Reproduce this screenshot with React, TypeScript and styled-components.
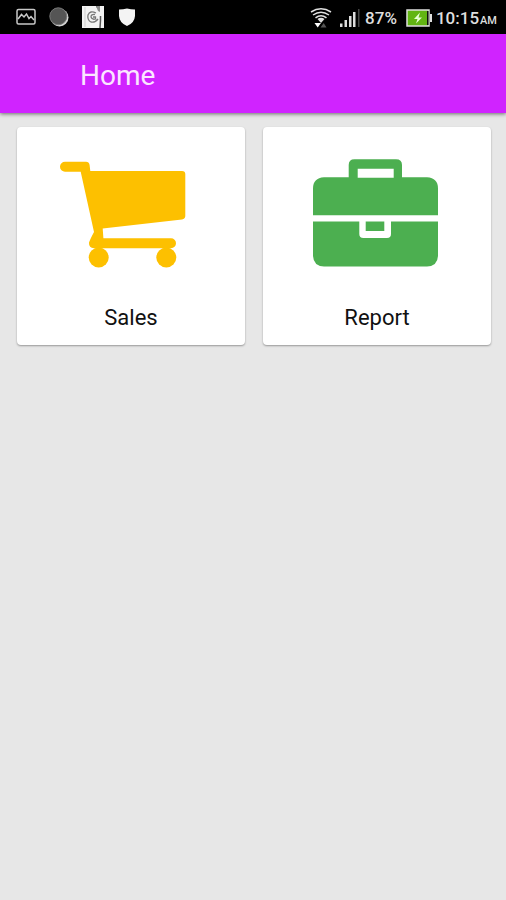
import React from "react";
import styled, { createGlobalStyle } from "styled-components";

const GlobalStyle = createGlobalStyle`
  *, *::before, *::after { box-sizing: border-box; }
  body { margin: 0; background: #e7e7e7; font-family: Roboto, "Liberation Sans", sans-serif; }
`;

const Screen = styled.div`
  min-height: 100vh;
  display: flex;
  flex-direction: column;
  background: #e7e7e7;
`;

const StatusBar = styled.div`
  display: flex;
  align-items: center;
  justify-content: space-between;
  height: 34px;
  padding: 0 9px 0 16px;
  background: #000;
  color: #dedede;
`;

const Notifications = styled.div`
  display: flex;
  align-items: center;
  gap: 13px;
`;

const SystemStatus = styled.div`
  display: flex;
  align-items: center;
  padding-top: 2px;
  font-size: 17px;
  font-weight: 500;
  line-height: 24px;
`;

const Glyph = styled.svg<{ $gap?: number }>`
  display: block;
  flex: none;
  margin-right: ${(p) => p.$gap ?? 0}px;
`;

const Percent = styled.span`
  margin-right: 9px;
`;

const Clock = styled.span`
  margin-left: 4px;
`;

const Meridiem = styled.small`
  margin-left: 1px;
  font-size: 11px;
  line-height: 12px;
`;

const AppBar = styled.header`
  display: flex;
  align-items: center;
  height: 79px;
  padding: 4px 80px 0;
  background: #d023ff;
  box-shadow: 0 1px 4px rgba(0, 0, 0, 0.55);
`;

const Title = styled.h1`
  margin: 0;
  color: #fbe6ff;
  font-size: 28px;
  font-weight: 400;
  line-height: 36px;
`;

const Tiles = styled.main`
  display: grid;
  grid-template-columns: 1fr 1fr;
  gap: 18px;
  padding: 14px 15px 14px 17px;
`;

const Tile = styled.button`
  display: flex;
  flex-direction: column;
  align-items: center;
  gap: 35px;
  padding: 32px 8px 13px;
  border: 0;
  border-radius: 4px;
  background: #fff;
  box-shadow: 0 1px 2px rgba(0, 0, 0, 0.35);
  color: #111;
  font-family: inherit;
  font-size: 22px;
  line-height: 28px;
  cursor: pointer;
`;

const CartIcon = () => (
  <Glyph width="144" height="110" viewBox="-1 -1 144 110" fill="#fdc000" aria-hidden="true">
    <path d="M5 1.7H26Q29 1.7 29.6 5L30.3 11H122Q125.3 11 125.3 14V56Q125.3 59 122 59.4L42.7 68.4L43.4 78.3H111A5 5 0 0 1 111 88.3H34Q28.8 88 29 83Q29.2 81 34 72L20.7 11.7H5A5 5 0 0 1 5 1.7Z" />
    <circle cx="38.7" cy="97.5" r="10" />
    <circle cx="106.3" cy="97.5" r="10" />
  </Glyph>
);

const CaseIcon = () => (
  <Glyph width="144" height="110" viewBox="-8 0 144 110" fill="#4caf50" aria-hidden="true">
    <path
      fillRule="evenodd"
      d="M35.7 19V6Q35.7 .3 41.5 .3H83Q89 .3 89 6V18.3H114Q125 19 125 29.5V56.3H0V29.5Q0 19 11 18.3H35.7ZM44.7 9.7V18.8H80.7V9.7Z"
    />
    <path d="M0 62.5H46.3V75Q46.3 79 50.3 79H74Q78 79 78 75V62.5H125V97Q124.5 107 114 107.6H11Q.5 107 0 97Z" />
    <path d="M52.7 62.5H71.3V72H52.7Z" />
  </Glyph>
);

const PictureGlyph = () => (
  <Glyph width="20" height="18" viewBox="0 0 20 18" fill="none" stroke="#c8c8c8" strokeWidth="1.5" aria-hidden="true">
    <rect x="1" y="1.5" width="18" height="14.5" rx="1.5" />
    <path d="M2 11L5.5 6.5L8 9L10.5 6L13 10.5L15 8.5L18 12" />
  </Glyph>
);

const BallGlyph = () => (
  <Glyph width="20" height="20" viewBox="0 0 20 20" aria-hidden="true">
    <circle cx="10.5" cy="10.5" r="9" fill="#d5d5d5" />
    <circle cx="9.3" cy="9.3" r="8.5" fill="#555" stroke="#777" />
  </Glyph>
);

const BookGlyph = () => (
  <Glyph width="22" height="22" viewBox="0 0 22 22" aria-hidden="true">
    <path d="M0 0H14L15 2L18 0H22V22H0Z" fill="#f2f2f2" />
    <path d="M3 1V21" stroke="#cfcfcf" />
    <path d="M14 0H18V6L16 5Z" fill="#8a8a8a" />
    <path d="M18.5 10V14L18 22" fill="none" stroke="#555" strokeWidth="1.5" />
    <path d="M14 7Q8 4 6 9Q5 14 9 16Q13 17 16 13M13 8.5Q9 8 9 11Q10 14 13.5 13V11H11" fill="none" stroke="#777" strokeWidth="1.3" />
  </Glyph>
);

const ShieldGlyph = () => (
  <Glyph width="18" height="20" viewBox="-2 0 18 20" aria-hidden="true">
    <path d="M0 2.5Q4 2.3 8 1.5Q12 2.3 16 2.5V9Q15.5 16 8 19Q.5 16 0 9Z" fill="#f4f4f4" />
  </Glyph>
);

const WifiGlyph = () => (
  <Glyph $gap={8} width="22" height="22" viewBox="0 0 22 22" fill="none" stroke="#e0e0e0" strokeWidth="1.5" aria-hidden="true">
    <path d="M1 5Q11 -1.5 21 5M3 8Q11 2.5 19 8M5.5 10.8Q11 6.5 16.5 10.8" />
    <path d="M7.5 12Q11 9.5 14.5 12L11 16Z" fill="#e0e0e0" stroke="none" />
    <path d="M4.5 16H11L7.7 20.5Z" fill="#fff" stroke="none" />
    <path d="M10.5 20.5L13.7 16L16.5 20.5Z" fill="#555" stroke="none" />
  </Glyph>
);

const SignalGlyph = () => (
  <Glyph $gap={5} width="20" height="20" viewBox="0 0 20 20" fill="#dcdcdc" aria-hidden="true">
    <path d="M0 15.5H2.5V19H0ZM4.5 12H7V19H4.5ZM9 8H11.5V19H9ZM13 4H15.5V19H13Z" />
    <path d="M18 1H19.5V19H18Z" fill="#454545" />
  </Glyph>
);

const BatteryGlyph = () => (
  <Glyph width="26" height="18" viewBox="0 0 26 18" aria-hidden="true">
    <rect x="1" y="1" width="22" height="16" fill="#62b512" stroke="#dedede" strokeWidth="1.5" />
    <path d="M21 2H22.5V16H21Z" fill="#111" />
    <path d="M24 5H26V13H24Z" fill="#dedede" />
    <path d="M14 3.5L8 10H11.5L10 14.5L16 8.5H12.5Z" fill="#e9ffd4" />
  </Glyph>
);

const tiles = [
  { label: "Sales", Icon: CartIcon },
  { label: "Report", Icon: CaseIcon },
];

export default function App() {
  return (
    <Screen>
      <GlobalStyle />
      <StatusBar>
        <Notifications>
          <PictureGlyph />
          <BallGlyph />
          <BookGlyph />
          <ShieldGlyph />
        </Notifications>
        <SystemStatus>
          <WifiGlyph />
          <SignalGlyph />
          <Percent>87%</Percent>
          <BatteryGlyph />
          <Clock>
            10:15
            <Meridiem>AM</Meridiem>
          </Clock>
        </SystemStatus>
      </StatusBar>
      <AppBar>
        <Title>Home</Title>
      </AppBar>
      <Tiles>
        {tiles.map(({ label, Icon }) => (
          <Tile key={label} type="button">
            <Icon />
            <span>{label}</span>
          </Tile>
        ))}
      </Tiles>
    </Screen>
  );
}
